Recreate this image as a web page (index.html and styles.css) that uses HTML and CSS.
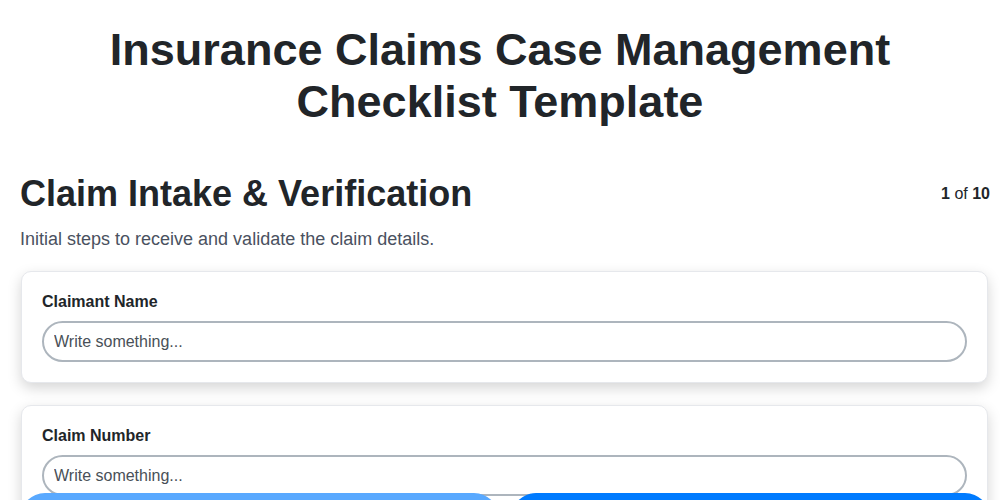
FILE: index.html
```html
<!DOCTYPE html>
<html lang="en">
<head>
<meta charset="utf-8">
<title>Insurance Claims Case Management Checklist Template</title>
<link rel="stylesheet" href="styles.css">
</head>
<body>
<main class="page">
  <h1 class="page-title">Insurance Claims Case Management Checklist Template</h1>
  <section class="step">
    <header class="step-head">
      <h2 class="step-title">Claim Intake &amp; Verification</h2>
      <div class="step-count"><b>1</b> of <b>10</b></div>
    </header>
    <p class="step-desc">Initial steps to receive and validate the claim details.</p>
    <div class="card">
      <label class="field-label" for="f1">Claimant Name</label>
      <input class="field-input" id="f1" type="text" placeholder="Write something...">
    </div>
    <div class="card">
      <label class="field-label" for="f2">Claim Number</label>
      <input class="field-input" id="f2" type="text" placeholder="Write something...">
    </div>
    <div class="card">
      <label class="field-label" for="f3">Date of Loss</label>
      <input class="field-input" id="f3" type="text" placeholder="Write something...">
    </div>
  </section>
</main>
<nav class="pager">
  <button class="pager-btn pager-prev" disabled>Previous</button>
  <button class="pager-btn pager-next">Next</button>
</nav>
</body>
</html>
```
FILE: styles.css
```css
* { box-sizing: border-box; }
html, body { margin: 0; padding: 0; background: #fff; }
body {
  font-family: "Liberation Sans", Arial, sans-serif;
  color: #212529;
}
.page {
  padding: 0 10px 80px 20px;
}
.page-title {
  margin: 0 auto;
  max-width: 850px;
  padding: 24px 10px 0 0;
  text-align: center;
  font-size: 45px;
  line-height: 52px;
  font-weight: 700;
  color: #212529;
}
.step { margin-top: 44px; }
.step-head {
  display: flex;
  justify-content: space-between;
  align-items: flex-start;
}
.step-title {
  margin: 0;
  font-size: 36px;
  line-height: 44px;
  font-weight: 700;
}
.step-count {
  font-size: 16px;
  line-height: 20px;
  padding-top: 12px;
}
.step-desc {
  margin: 12px 0 20px;
  font-size: 18px;
  line-height: 23px;
  color: #4a5160;
}
.card {
  margin: 0 2px 22px 1px;
  padding: 20px 20px 20px;
  background: #fff;
  border: 1px solid #e6e8ec;
  border-radius: 10px;
  box-shadow: 0 5px 14px rgba(0, 0, 0, 0.17);
  display: flex;
  flex-direction: column;
}
.field-label {
  font-size: 16px;
  line-height: 19px;
  font-weight: 700;
  margin-bottom: 10px;
  color: #212529;
}
.field-input {
  height: 41px;
  border: 2px solid #adb5bd;
  border-radius: 25px;
  padding: 0 10px;
  font-family: "Liberation Sans", Arial, sans-serif;
  font-size: 16px;
  color: #495057;
  background: #fff;
  outline: none;
}
.field-input::placeholder { color: #495057; opacity: 1; }
.pager {
  position: fixed;
  left: 20px;
  right: 10px;
  top: 493px;
  display: flex;
  gap: 12px;
}
.pager-btn {
  flex: 1;
  height: 50px;
  border: none;
  border-radius: 25px;
  background: #007bff;
  color: #fff;
  font-family: "Liberation Sans", Arial, sans-serif;
  font-size: 18px;
  font-weight: 700;
}
.pager-prev { background: #59a9ff; }
```
